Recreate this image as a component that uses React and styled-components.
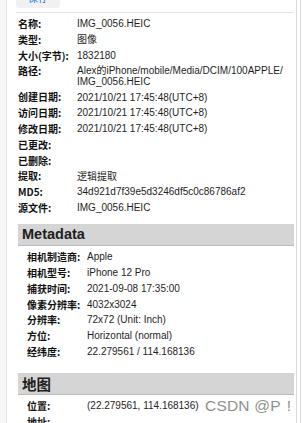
import React from "react";
import styled, { createGlobalStyle } from "styled-components";

const GlobalStyle = createGlobalStyle`
  html, body {
    margin: 0;
    padding: 0;
    background: #fff;
    overflow: hidden;
  }
  body {
    font-family: "Liberation Sans", "Noto Sans CJK SC", sans-serif;
    color: #1a1a1a;
  }
`;

const StyledPage = styled.div`
  position: relative;
  display: flex;
  height: 423px;
  overflow: hidden;
`;
const StyledGutter = styled.div`
  width: 6px;
  background: #f6f6f6;
  border-right: 1px solid #e2e2e2;
  flex: none;
`;
const StyledContent = styled.div`
  flex: 1;
  padding: 0 2px 0 9px;
  min-width: 0;
`;
const StyledScrollTrack = styled.div`
  width: 3px;
  flex: none;
  border-left: 1px solid #dcdcdc;
  border-right: 1px solid #dcdcdc;
  background: #fff;
  margin-right: 2px;
`;
const StyledSaveBtn = styled.button`
  display: block;
  width: 44px;
  height: 20px;
  margin-top: -12px;
  border: none;
  border-radius: 3px;
  background: #f1f1f1;
  color: #2a6bd3;
  font-family: "Noto Sans CJK SC", sans-serif;
  font-size: 10px;
  line-height: 12px;
  padding: 0;
`;
const StyledRule = styled.div`
  height: 1px;
  background: #e4e4e4;
  margin-top: 4px;
`;
const StyledList = styled.div`
  display: flex;
  flex-direction: column;
  padding: ${p => p.$pad};
`;
const StyledRow = styled.div`
  display: grid;
  grid-template-columns: ${p => p.$labelWidth}px 1fr;
  align-items: center;
  height: ${p => p.$h}px;
  font-size: 10px;
  overflow: visible;
`;
const StyledLabel = styled.div`
  font-family: "Noto Sans CJK SC", sans-serif;
  font-weight: 700;
  line-height: 12px;
  height: 12px;
  color: #111;
  white-space: nowrap;
  align-self: ${p => (p.$top ? "start" : "center")};
  margin-top: ${p => (p.$top ? "1.5px" : "0")};
`;
const StyledValue = styled.div`
  font-family: "Liberation Sans", "Noto Sans CJK SC", sans-serif;
  line-height: 11.7px;
  color: #1e1e1e;
  white-space: nowrap;
`;
const StyledSectionBar = styled.div`
  margin: ${p => p.$top}px 0 0 2px;
  height: 21px;
  background: #d5d5d5;
  border-bottom: 1px solid #bcbcbc;
  display: flex;
  align-items: center;
  padding-left: 4px;
  font-family: "Liberation Sans", "Noto Sans CJK SC", sans-serif;
  font-weight: 700;
  font-size: 14.5px;
  color: #202020;
`;
const StyledWatermark = styled.div`
  position: absolute;
  left: 205px;
  top: 397px;
  font-family: "Liberation Sans", sans-serif;
  font-size: 15.5px;
  line-height: 18px;
  color: #8f8f8f;
  letter-spacing: 0.2px;
  text-shadow: 0 0 2px #fff;
  span {
    margin-left: 6px;
  }
`;

const fileRows = [
  ["名称:", "IMG_0056.HEIC"],
  ["类型:", "图像"],
  ["大小(字节):", "1832180"],
  ["路径:", <>Alex的iPhone/mobile/Media/DCIM/100APPLE/<br />IMG_0056.HEIC</>, 26],
  ["创建日期:", "2021/10/21 17:45:48(UTC+8)"],
  ["访问日期:", "2021/10/21 17:45:48(UTC+8)"],
  ["修改日期:", "2021/10/21 17:45:48(UTC+8)"],
  ["已更改:", ""],
  ["已删除:", ""],
  ["提取:", "逻辑提取"],
  ["MD5:", "34d921d7f39e5d3246df5c0c86786af2"],
  ["源文件:", "IMG_0056.HEIC"]
];

const metaRows = [
  ["相机制造商:", "Apple"],
  ["相机型号:", "iPhone 12 Pro"],
  ["捕获时间:", "2021-09-08 17:35:00"],
  ["像素分辨率:", "4032x3024"],
  ["分辨率:", "72x72 (Unit: Inch)"],
  ["方位:", "Horizontal (normal)"],
  ["经纬度:", "22.279561 / 114.168136"]
];

const mapRows = [
  ["位置:", "(22.279561, 114.168136)"],
  ["地址:", ""]
];

const Rows = ({ rows, labelWidth, pad }) => (
  <StyledList $pad={pad}>
    {rows.map(([label, value, h], i) => (
      <StyledRow key={i} $labelWidth={labelWidth} $h={h || 15.8}>
        <StyledLabel $top={!!h}>{label}</StyledLabel>
        <StyledValue>{value}</StyledValue>
      </StyledRow>
    ))}
  </StyledList>
);

const App = () => {
  return (
    <>
      <GlobalStyle />
      <StyledPage>
        <StyledGutter />
        <StyledContent>
          <StyledSaveBtn>保存</StyledSaveBtn>
          <StyledRule />
          <Rows rows={fileRows} labelWidth={59} pad="3.1px 0 0 2px" />
          <StyledSectionBar $top={8}>Metadata</StyledSectionBar>
          <Rows rows={metaRows} labelWidth={60} pad="3.4px 0 0 11px" />
          <StyledSectionBar $top={13}>地图</StyledSectionBar>
          <Rows rows={mapRows} labelWidth={60} pad="3.5px 0 0 11px" />
        </StyledContent>
        <StyledScrollTrack />
        <StyledWatermark>CSDN @P<span>!</span></StyledWatermark>
      </StyledPage>
    </>
  );
};

export default App;
